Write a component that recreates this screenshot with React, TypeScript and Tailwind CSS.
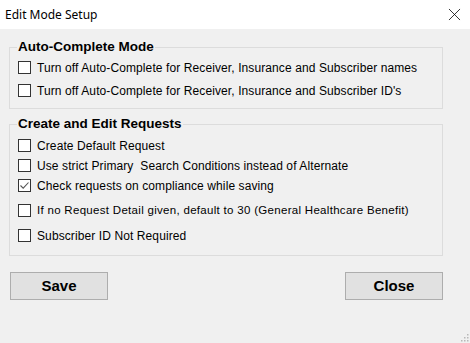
import { X } from "lucide-react";

type Item = { label: string; checked?: boolean; small?: boolean };

const autoComplete: Item[] = [
  { label: "Turn off Auto-Complete for Receiver, Insurance and Subscriber names" },
  { label: "Turn off Auto-Complete for Receiver, Insurance and Subscriber ID's" },
];

const requests: Item[] = [
  { label: "Create Default Request" },
  { label: "Use strict Primary  Search Conditions instead of Alternate" },
  { label: "Check requests on compliance while saving", checked: true },
  { label: "If no Request Detail given, default to 30 (General Healthcare Benefit)", small: true },
  { label: "Subscriber ID Not Required" },
];

function CheckBox({ checked }: { checked?: boolean }) {
  return (
    <span className="flex h-[13px] w-[13px] shrink-0 items-center justify-center border border-[#333333] bg-white">
      {checked && (
        <svg width="11" height="11" viewBox="0 0 11 11">
          <path d="M1.5 5.5 L4.2 8.2 L9.5 2.5" fill="none" stroke="#555" strokeWidth="1.1" />
        </svg>
      )}
    </span>
  );
}

function Row({ item }: { item: Item }) {
  return (
    <div className="flex h-[13px] items-center gap-[6px]">
      <CheckBox checked={item.checked} />
      <span
        className={`whitespace-pre leading-none text-black ${
          item.small ? "text-[11.5px] tracking-[0.3px]" : "text-[12px] tracking-[0.1px]"
        }`}
      >
        {item.label}
      </span>
    </div>
  );
}

function Group({ title, children, className }: { title: string; children: React.ReactNode; className?: string }) {
  return (
    <div className={`relative border border-[#dcdcdc] ${className ?? ""}`}>
      <span className="absolute left-[7px] top-[-8px] bg-[#f0f0f0] px-[1px] text-[13.5px] font-bold leading-none text-black">
        {title}
      </span>
      {children}
    </div>
  );
}

export default function App() {
  return (
    <div
      className="relative flex h-[343px] w-[470px] flex-col bg-[#f0f0f0]"
      style={{ fontFamily: '"Liberation Sans", Arial, sans-serif' }}
    >
      <div className="flex h-[29px] shrink-0 items-center justify-between bg-white pl-[5px] pr-[5px]">
        <span className="text-[12px] text-black" style={{ fontFamily: '"Noto Sans", sans-serif' }}>
          Edit Mode Setup
        </span>
        <X size={21} strokeWidth={0.9} className="text-black" />
      </div>

      <div className="flex flex-col pl-[9px] pr-[27px] pt-[18px]">
        <Group title="Auto-Complete Mode" className="h-[62px]">
          <div className="flex flex-col gap-[10px] pl-[8px] pt-[13px]">
            {autoComplete.map((item) => (
              <Row key={item.label} item={item} />
            ))}
          </div>
        </Group>

        <Group title="Create and Edit Requests" className="mt-[15px] h-[132px]">
          <div className="flex flex-col pl-[8px] pt-[14px]">
            <Row item={requests[0]} />
            <div className="mt-[7px]"><Row item={requests[1]} /></div>
            <div className="mt-[7px]"><Row item={requests[2]} /></div>
            <div className="mt-[12px]"><Row item={requests[3]} /></div>
            <div className="mt-[12px]"><Row item={requests[4]} /></div>
          </div>
        </Group>

        <div className="mt-[16px] flex justify-between pl-[1px]">
          <button className="h-[28px] w-[98px] border border-[#adadad] bg-[#e1e1e1] text-[15px] font-bold text-black">
            Save
          </button>
          <button className="h-[28px] w-[98px] border border-[#adadad] bg-[#e1e1e1] text-[15px] font-bold text-black">
            Close
          </button>
        </div>
      </div>

      {/* size grip */}
      <svg className="absolute bottom-[1px] right-[1px]" width="10" height="10" viewBox="0 0 10 10">
        {[
          [8, 2],
          [8, 5],
          [5, 5],
          [8, 8],
          [5, 8],
          [2, 8],
        ].map(([x, y]) => (
          <rect key={`${x}-${y}`} x={x} y={y} width="1.5" height="1.5" fill="#b8b8b8" />
        ))}
      </svg>
    </div>
  );
}
